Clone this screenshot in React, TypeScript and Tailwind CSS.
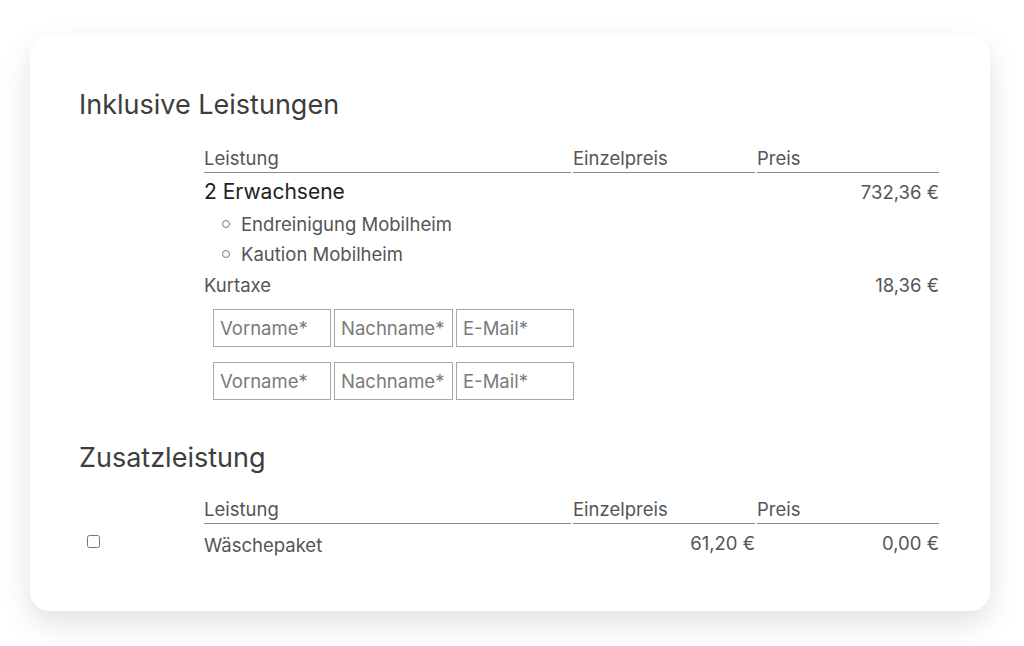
import React from "react";

const font = { fontFamily: "Inter, 'Noto Sans', sans-serif" };

function HeaderRow() {
  return (
    <>
      <div />
      <div className="border-b border-[#8a8a8a] pb-[2px] text-[18.5px] leading-[24px] text-[#555]">Leistung</div>
      <div className="border-b border-[#8a8a8a] pb-[2px] text-[18.5px] leading-[24px] text-[#555]">Einzelpreis</div>
      <div className="border-b border-[#8a8a8a] pb-[2px] text-[18.5px] leading-[24px] text-[#555]">Preis</div>
    </>
  );
}

function Input({ placeholder, w }: { placeholder: string; w: string }) {
  return (
    <input
      placeholder={placeholder}
      className={`${w} h-[38px] border border-[#a8a8a8] bg-white px-[6px] text-[18.5px] text-[#555] placeholder:text-[#7a7a7a] outline-none`}
      style={font}
    />
  );
}

export default function App() {
  return (
    <div className="min-h-[646px] w-[1024px] bg-white pt-[35px] pl-[30px]" style={font}>
      <div className="h-[576px] w-[960px] rounded-[20px] bg-white pl-[49px] pt-[52px] shadow-[0_12px_30px_rgba(0,0,0,0.12)]">
        <h2 className="text-[27px] leading-[36px] text-[#3d3d3d]">Inklusive Leistungen</h2>
        <div className="mt-[23px] grid grid-cols-[123px_367px_182px_182px] gap-x-[2px]">
          <HeaderRow />
          <div />
          <div className="pt-[6px] text-[21px] leading-[26px] text-[#222]">2 Erwachsene</div>
          <div />
          <div className="pt-[6px] text-right text-[18.5px] leading-[26px] text-[#555]">732,36 €</div>
          <div />
          <ul className="col-span-3 mt-[4px] pl-[18px] text-[18.5px] leading-[30px] text-[#555]">
            <li className="flex items-center gap-[11px]">
              <span className="inline-block h-[8px] w-[8px] rounded-full border border-[#777]" />
              Endreinigung Mobilheim
            </li>
            <li className="flex items-center gap-[11px]">
              <span className="inline-block h-[8px] w-[8px] rounded-full border border-[#777]" />
              Kaution Mobilheim
            </li>
          </ul>
          <div />
          <div className="mt-[1px] text-[18.5px] leading-[30px] text-[#555]">Kurtaxe</div>
          <div />
          <div className="mt-[1px] text-right text-[18.5px] leading-[30px] text-[#555]">18,36 €</div>
          <div />
          <div className="col-span-3 flex flex-col gap-[15px] pl-[9px] pt-[9px]">
            {[0, 1].map((i) => (
              <div key={i} className="flex gap-[3px]">
                <Input placeholder="Vorname*" w="w-[118px]" />
                <Input placeholder="Nachname*" w="w-[119px]" />
                <Input placeholder="E-Mail*" w="w-[118px]" />
              </div>
            ))}
          </div>
        </div>
        <h2 className="mt-[40px] text-[27px] leading-[36px] text-[#3d3d3d]">Zusatzleistung</h2>
        <div className="mt-[21px] grid grid-cols-[123px_367px_182px_182px] gap-x-[2px]">
          <HeaderRow />
          <div className="flex items-start pl-[8px] pt-[11px]">
            <input type="checkbox" className="h-[13px] w-[13px]" />
          </div>
          <div className="pt-[9px] text-[18.5px] leading-[24px] text-[#555]">Wäschepaket</div>
          <div className="pt-[7px] text-right text-[18.5px] leading-[24px] text-[#555]">61,20 €</div>
          <div className="pt-[7px] text-right text-[18.5px] leading-[24px] text-[#555]">0,00 €</div>
        </div>
      </div>
    </div>
  );
}
